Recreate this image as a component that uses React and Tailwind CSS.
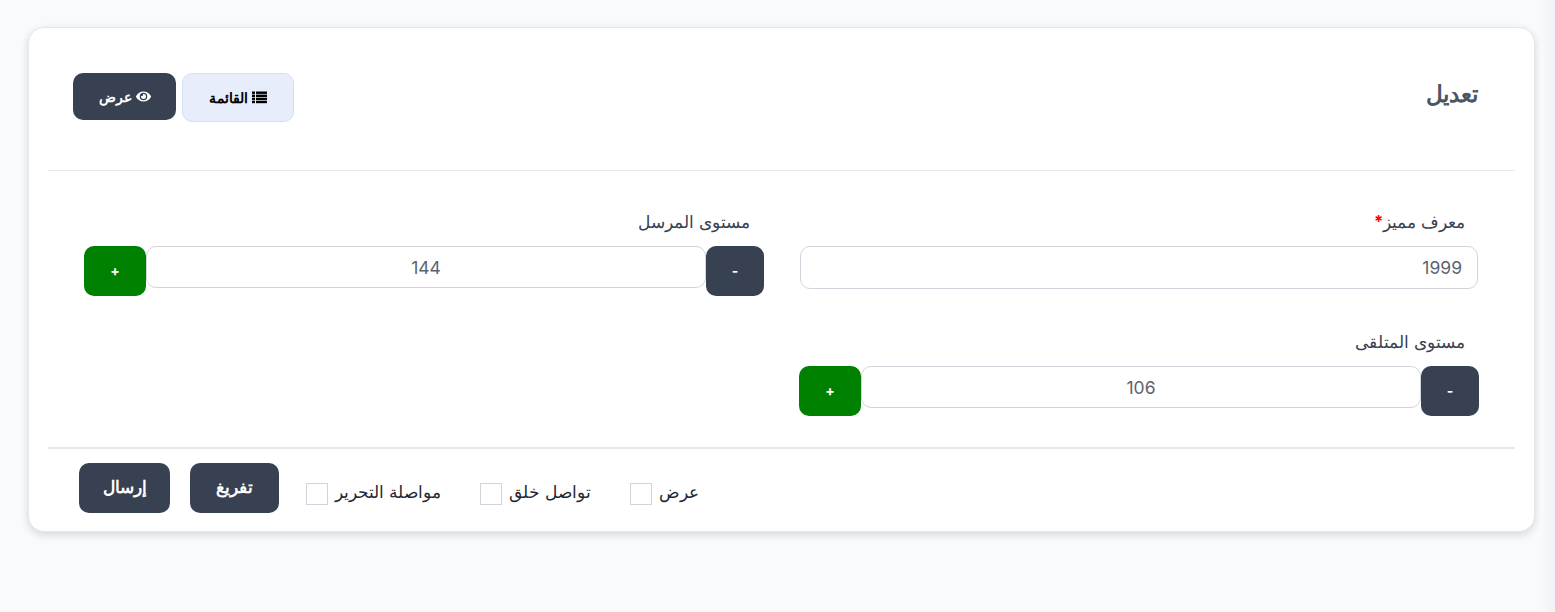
import { FaEye } from 'react-icons/fa'

function ListIcon() {
  return (
    <svg width="15" height="13" viewBox="0 0 15 13" fill="currentColor">
      <rect x="0" y="0.5" width="3" height="2.4" />
      <rect x="4" y="0.5" width="11" height="2.4" />
      <rect x="0" y="3.6" width="3" height="2.4" />
      <rect x="4" y="3.6" width="11" height="2.4" />
      <rect x="0" y="6.7" width="3" height="2.4" />
      <rect x="4" y="6.7" width="11" height="2.4" />
      <rect x="0" y="9.8" width="3" height="2.4" />
      <rect x="4" y="9.8" width="11" height="2.4" />
    </svg>
  )
}

function Stepper({ value }) {
  return (
    <div className="flex items-start">
      <button className="w-[58px] h-[50px] bg-[#374151] text-white rounded-[10px] text-sm font-bold">-</button>
      <input readOnly value={value} className="flex-1 min-w-0 h-[42px] border border-[#d1d5db] rounded-[10px] text-center text-[#5b6470] text-[17.5px] bg-white outline-none" />
      <button className="w-[62px] h-[50px] bg-[#008000] text-white rounded-[10px] text-sm font-bold">+</button>
    </div>
  )
}

function Check({ label }) {
  return (
    <label className="flex items-center gap-[7px] h-[22px] text-[#1f2937] text-[17px]">
      <span className="leading-[18px] mb-1">{label}</span>
      <span className="w-[22px] h-[22px] border border-[#d1d5db] bg-white" />
    </label>
  )
}

export default function App() {
  return (
    <div className="h-[612px] bg-[#f9fafb] overflow-hidden font-['Inter','Noto_Sans',sans-serif] flex">
      <div className="w-[1540px] shrink-0 pt-[27px] pl-[28px]">
        <div dir="rtl" className="w-[1507px] h-[505px] bg-white rounded-2xl border border-[#e5e7eb] shadow-[0_3px_8px_rgba(0,0,0,0.14)] px-[19px] flex flex-col">
          {/* header */}
          <div className="h-[143px] shrink-0 border-b border-[#e5e7eb] flex items-center justify-between pr-[37px] pl-[25px]">
            <h1 className="text-[22.5px] font-semibold text-[#4b5563] mb-[10px]">تعديل</h1>
            <div className="flex gap-[6px] items-start mb-[4px]">
              <button className="w-[112px] h-[49px] bg-[#e8edfc] border border-[#d5dff8] rounded-[10px] text-black text-[14px] font-bold flex items-center justify-center gap-1">
                <ListIcon />
                القائمة
              </button>
              <button className="w-[103px] h-[47px] bg-[#374151] rounded-[10px] text-white text-[14px] font-bold flex items-center justify-center gap-1">
                <FaEye size={15} />
                عرض
              </button>
            </div>
          </div>

          {/* fields */}
          <div className="h-[278px] shrink-0 border-b-2 border-[#e5e7eb] pt-[39px] pr-[36px] pl-[36px]">
            <div className="grid grid-cols-2 gap-x-[35px] gap-y-[34px]">
              <div>
                <div className="h-[36px] pr-[14px] text-[16.8px] text-[#374151]">معرف مميز<span className="text-[#ff0000] font-bold">*</span></div>
                <input readOnly value="1999" className="block w-[678px] mr-[1px] h-[43px] border border-[#d1d5db] rounded-[10px] px-[15px] text-[#5b6470] text-[17.5px] bg-white outline-none" />
              </div>
              <div>
                <div className="h-[36px] pr-[14px] text-[16.8px] text-[#374151]">مستوى المرسل</div>
                <Stepper value="144" />
              </div>
              <div>
                <div className="h-[36px] pr-[14px] text-[16.8px] text-[#374151]">مستوى المتلقى</div>
                <Stepper value="106" />
              </div>
            </div>
          </div>

          {/* footer */}
          <div className="flex-1 flex items-start gap-[27px] pt-[14px] pr-[816px]">
            <div className="flex items-center gap-[39px] mt-[20px]">
              <Check label="عرض" />
              <Check label="تواصل خلق" />
              <Check label="مواصلة التحرير" />
            </div>
            <div className="flex gap-[20px]">
              <button className="w-[89px] h-[50px] bg-[#374151] text-white rounded-[10px] text-[17px] font-bold">تفريغ</button>
              <button className="w-[91px] h-[50px] bg-[#374151] text-white rounded-[10px] text-[17px] font-bold">إرسال</button>
            </div>
          </div>
        </div>
      </div>
      <div className="flex-1 bg-gradient-to-r from-[#f9fafb] to-[#f1f2f5]" />
    </div>
  )
}
